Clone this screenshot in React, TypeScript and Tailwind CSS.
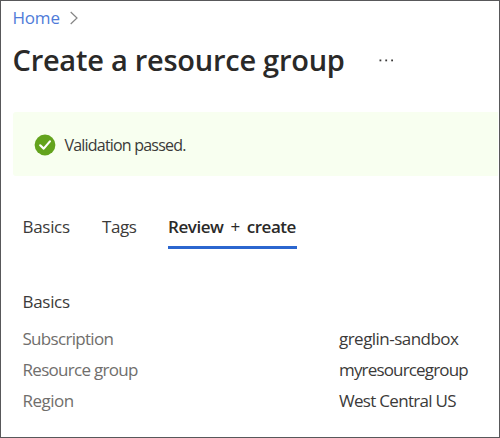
const details = [
  { label: 'Subscription', value: 'greglin-sandbox', labelTracking: 'tracking-[-0.7px]', valueTracking: 'tracking-[-0.53px]' },
  { label: 'Resource group', value: 'myresourcegroup', labelTracking: 'tracking-[-0.7px]', valueTracking: 'tracking-[-0.83px]' },
  { label: 'Region', value: 'West Central US', labelTracking: 'tracking-[-0.5px]', valueTracking: 'tracking-[-0.7px]' },
];

export default function App() {
  return (
    <main className="h-[438px] w-[500px] overflow-hidden border border-[#58585a] bg-white pl-[11.5px] font-['Open_Sans','Noto_Sans',sans-serif] text-[17px] text-[#3b3a39]">
      <nav className="flex h-[29px] items-center pt-1">
        <a className="tracking-[-0.2px] text-[#4f7bd9]"><span>Home</span></a>
        <svg className="ml-[10px] h-[14px] w-[8px]" viewBox="0 0 8 14" fill="none" stroke="#858585" strokeWidth="1.2">
          <path d="M0.7 1 L7 7 L0.7 13" />
        </svg>
      </nav>
      <header className="flex h-[60px] items-center">
        <h1 className="w-[333px] whitespace-nowrap text-[29px] leading-10 font-semibold tracking-[-0.25px] text-[#2a2928]"><span>Create a resource group</span></h1>
        <svg className="ml-[33px] h-[3px] w-[15px]" viewBox="0 0 15 3" fill="#3b3a39">
          <rect x="0.5" y="0.5" width="1.8" height="1.8" />
          <rect x="6.3" y="0.5" width="1.8" height="1.8" />
          <rect x="12.2" y="0.5" width="1.8" height="1.8" />
        </svg>
      </header>
      <section className="mt-[22px] mr-px flex h-[64px] items-center rounded-l-[3px] bg-[#f8fff0] pt-px pl-[21px]">
        <svg className="h-[22px] w-[22px]" viewBox="0 0 22 22">
          <circle cx="11" cy="11" r="10.4" fill="#63a31d" />
          <path d="M6.2 11.3 L9.7 14.6 L15.9 7.4" fill="none" stroke="white" strokeWidth="2.2" strokeLinecap="round" strokeLinejoin="round" />
        </svg>
        <p className="ml-[9px] text-[16px] tracking-[-0.8px]"><span>Validation passed.</span></p>
      </section>
      <div className="mt-[30px] flex h-[43px] pl-[10px] leading-[41px]">
        <div className="w-[79.5px] tracking-[-0.3px]"><span>Basics</span></div>
        <div className="w-[66px] tracking-[-0.4px]"><span>Tags</span></div>
        <div className="w-[129px] whitespace-nowrap border-b-[3px] border-[#2b66cf] font-semibold tracking-[-0.45px] text-[#2a2928] [word-spacing:3px]"><span>Review <span className="font-normal">+</span> create</span></div>
      </div>
      <section className="pt-[37px] pl-[10px]">
        <h2 className="h-[37px] leading-[31px] tracking-[-0.3px]"><span>Basics</span></h2>
        <dl>
          {details.map((d) => (
            <div key={d.label} className="flex h-[31px] leading-[31px]">
              <dt className={`w-[316.5px] text-[#706e6c] ${d.labelTracking}`}><span>{d.label}</span></dt>
              <dd className={d.valueTracking}><span>{d.value}</span></dd>
            </div>
          ))}
        </dl>
      </section>
    </main>
  );
}
